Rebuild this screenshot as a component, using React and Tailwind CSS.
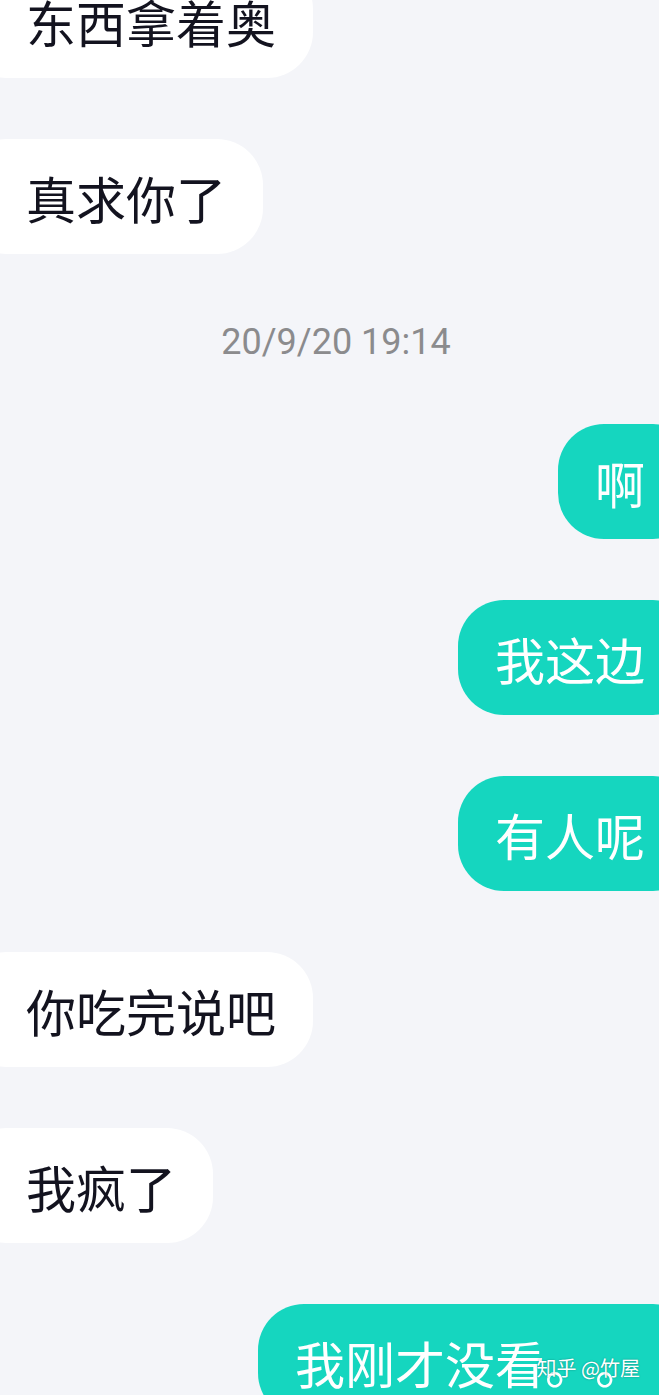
const cjk = { fontFamily: '"Noto Sans CJK SC", "Noto Sans", sans-serif' };

const messages = [
  { side: "left", text: "东西拿着奥" },
  { side: "left", text: "真求你了" },
  { side: "time", text: "20/9/20 19:14" },
  { side: "right", text: "啊" },
  { side: "right", text: "我这边" },
  { side: "right", text: "有人呢" },
  { side: "left", text: "你吃完说吧" },
  { side: "left", text: "我疯了" },
  { side: "right", text: "我刚才没看。。" },
];

function Bubble({ side, text }) {
  if (side === "time") {
    return (
      <div
        className="flex h-[48px] items-center justify-center pl-[13px] pt-[6px] text-[36px] text-[#8b8b8d]"
        style={{ fontFamily: "Roboto, 'Liberation Sans', sans-serif" }}
      >
        {text}
      </div>
    );
  }
  if (side === "left") {
    return (
      <div className="flex justify-start">
        <div
          className="-ml-[40px] flex h-[115px] items-center rounded-[46px] bg-white pl-[66px] pr-[37px] text-[50px] leading-none text-[#13131f]"
          style={cjk}
        >
          {text}
        </div>
      </div>
    );
  }
  return (
    <div className="flex justify-end">
      <div
        className="-mr-[40px] flex h-[115px] items-center rounded-[46px] bg-[#15d6bf] pl-[37px] pr-[54px] text-[50px] leading-none text-white [text-spacing-trim:space-all]"
        style={cjk}
      >
        {text}
      </div>
    </div>
  );
}

export default function App() {
  return (
    <div className="relative h-[1395px] w-full overflow-hidden bg-[#f4f5f9]">
      <div className="-mt-[37px] flex flex-col gap-[61px]">
        {messages.map((m, i) => (
          <Bubble key={i} {...m} />
        ))}
      </div>
      <div
        className="absolute bottom-[17px] right-[19px] text-[20px] leading-none text-white"
        style={{ ...cjk, textShadow: "0 0 2px rgba(0,0,0,.35)" }}
      >
        知乎 @竹屋
      </div>
    </div>
  );
}
